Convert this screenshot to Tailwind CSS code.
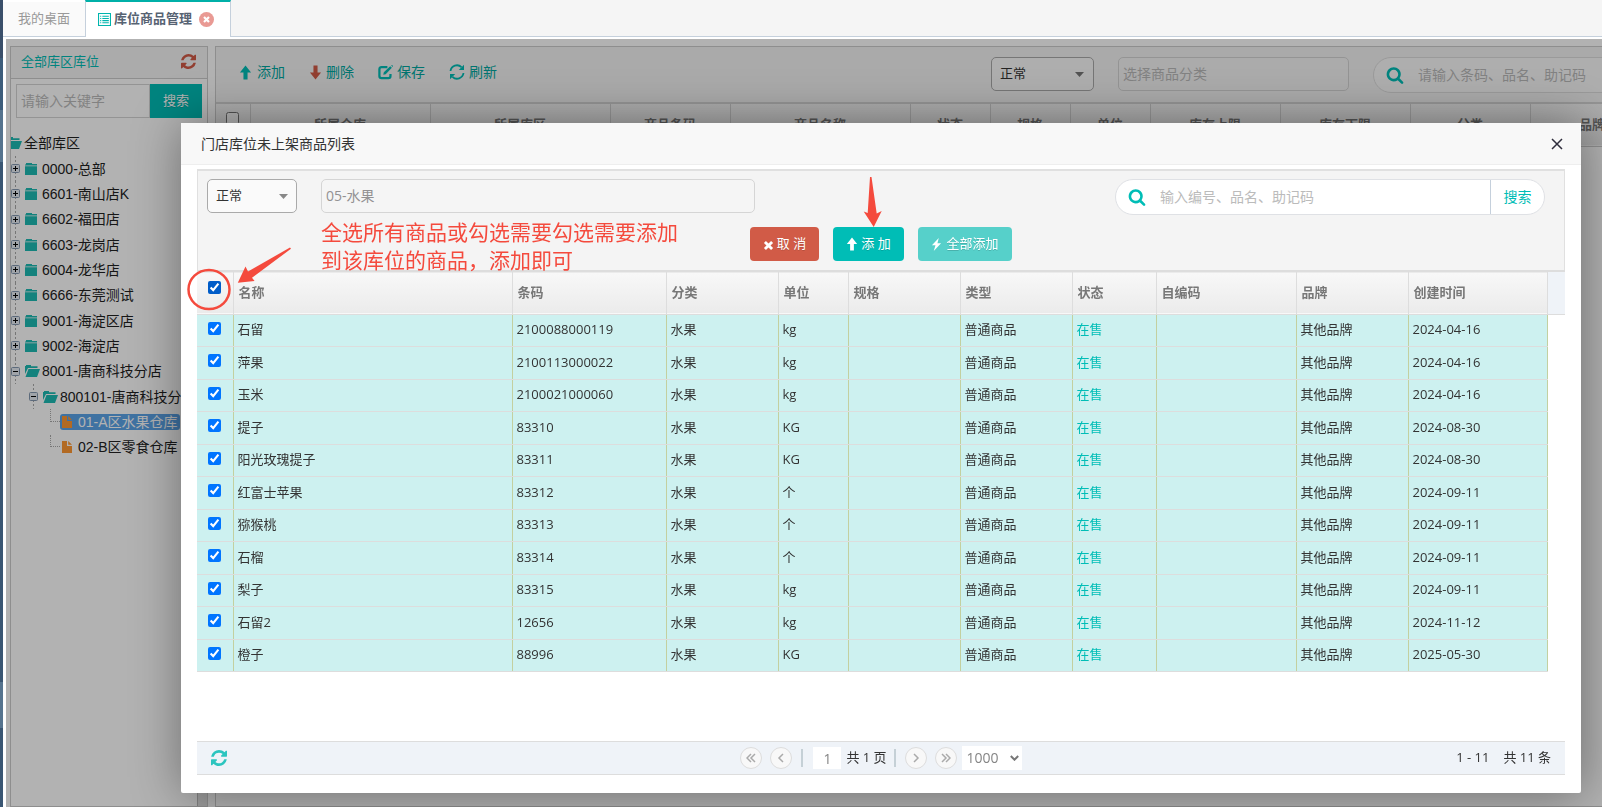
<!DOCTYPE html>
<html lang="zh-CN">
<head>
<meta charset="utf-8">
<title>库位商品管理</title>
<script src="https://cdn.jsdelivr.net/npm/@tailwindcss/browser@4"></script>
</head>
<body class="relative flex h-screen overflow-hidden bg-white font-['Open_Sans','Noto_Sans_CJK_SC',sans-serif] text-[13px] text-[#333]">

<svg class="hidden">
  <symbol id="i-search" viewBox="0 0 1792 1792"><path d="M1216 832q0-185-131.5-316.5t-316.5-131.5-316.5 131.5-131.5 316.5 131.5 316.5 316.5 131.5 316.5-131.5 131.5-316.5zm512 832q0 52-38 90t-90 38q-54 0-90-38l-343-342q-179 124-399 124-143 0-273.5-55.5t-225-150-150-225-55.5-273.5 55.5-273.5 150-225 225-150 273.5-55.5 273.5 55.5 225 150 150 225 55.5 273.5q0 220-124 399l343 343q37 37 37 90z"/></symbol>
  <symbol id="i-refresh" viewBox="128 128 1536 1536"><path d="M1639 1056q0 5-1 7-64 268-268 434.500t-478 166.500q-146 0-282.500-55t-243.500-157l-129 129q-19 19-45 19t-45-19-19-45v-448q0-26 19-45t45-19h448q26 0 45 19t19 45-19 45l-137 137q71 66 161 102t187 36q134 0 250-65t186-179q11-17 53-117 8-23 30-23h192q13 0 22.500 9.500t9.500 22.500zm25-800v448q0 26-19 45t-45 19h-448q-26 0-45-19t-19-45 19-45l138-138q-148-137-349-137-134 0-250 65t-186 179q-11 17-53 117-8 23-30 23h-199q-13 0-22.500-9.500t-9.500-22.500v-7q65-268 270-434.500t480-166.500q146 0 284 55.500t245 156.500l130-129q19-19 45-19t45 19 19 45z"/></symbol>
  <symbol id="i-cycle" viewBox="0 0 16 16"><path d="M1.500 7A6.500 6.500 0 0 1 12.500 3.200M14.500 9A6.500 6.500 0 0 1 3.500 12.800" fill="none" stroke="currentColor" stroke-width="1.800"/><path d="M15 .8v5.200H9.800zM1 15.200V10h5.200z"/></symbol>
  <symbol id="i-up" viewBox="0 0 14 16"><path d="M7 .5 13 8H9.200v7.500H4.800V8H1z"/></symbol>
  <symbol id="i-down" viewBox="0 0 14 16"><path d="M7 15.500 1 8h3.800V.5h4.400V8H13z"/></symbol>
  <symbol id="i-edit" viewBox="0 0 16 16"><path d="M10 2.200H3.700A2.200 2.200 0 0 0 1.500 4.400v7.400A2.200 2.200 0 0 0 3.700 14h7.400a2.200 2.200 0 0 0 2.200-2.200V9.500" fill="none" stroke="currentColor" stroke-width="2.400"/><path d="M13 1.200 14.800 3 8.200 9.800 5.600 10.400 6.200 7.800zM14 .4l1-.4 1 1-.5 1z"/></symbol>
  <symbol id="i-times" viewBox="0 0 12 12"><path d="M3.200 1 6 3.800 8.800 1 11 3.200 8.200 6 11 8.800 8.800 11 6 8.200 3.200 11 1 8.800 3.800 6 1 3.200z"/></symbol>
  <symbol id="i-flash" viewBox="0 0 12 14"><path d="M8.500 0 1 7.800h3.900L3 14l8-8.300H7z"/></symbol>
  <symbol id="i-folder" viewBox="0 0 12 12"><path d="M0 1.500h1V0h6v1h5v1.500H0zM0 3.200h12V12H0z"/></symbol>
  <symbol id="i-open" viewBox="0 0 15 12"><path d="M0 9V1h1V0h5v1.200h6.500V3H3zM3.500 4H15l-3 8H.5z"/></symbol>
  <symbol id="i-file" viewBox="0 0 10 12"><path d="M0 0h5v5h5v7H0zM6.200 0v3.800H10z"/></symbol>
  <symbol id="i-plus" viewBox="0 0 9 9"><rect x=".5" y=".5" width="8" height="8" rx="1" fill="#e6ebf2" stroke="#8598b0"/><path d="M2 4.500h5M4.500 2v5" stroke="#000" fill="none"/></symbol>
  <symbol id="i-minus" viewBox="0 0 9 9"><rect x=".5" y=".5" width="8" height="8" rx="1" fill="#e6ebf2" stroke="#8598b0"/><path d="M2 4.500h5" stroke="#000" fill="none"/></symbol>
</svg>

<div class="flex w-[3px] shrink-0 flex-col">
  <div class="h-[58px] bg-[#3a4f6a]"></div>
  <div class="h-[52px] bg-[#3d5d7b]"></div>
  <div class="h-[52px] bg-[#56748f]"></div>
  <div class="h-[520px] bg-[#3a5673]"></div>
  <div class="h-[46px] bg-[#56748f]"></div>
  <div class="flex-1 bg-[#3a5673]"></div>
</div>

<div class="flex min-w-0 flex-1 flex-col">
  <!-- page tabs -->
  <nav class="flex h-[37px] shrink-0 items-stretch border-b border-[#c5d0dc] bg-[#f5f5f5]">
    <a href="#" class="flex w-[82px] items-center justify-center border-t-2 border-white bg-[#fafafa] pb-px text-[#999]">我的桌面</a>
    <a href="#" class="-mb-px flex w-[146px] items-center justify-center gap-[3px] border-x border-t-2 border-x-[#c5d0dc] border-t-[#00b0a8] bg-white pr-1 pb-px font-bold text-[#576373]">
      <svg class="size-[13px]" viewBox="0 0 12 12" fill="none" stroke="#00b5ad"><path d="M.5.500h11v11H.5zM2 3h1m1 0h6M2 5h1m1 0h6M2 7h1m1 0h6M2 9h1m1 0h6"/></svg>
      库位商品管理
      <svg class="ml-1 size-[15px]" viewBox="0 0 15 15"><circle cx="7.500" cy="7.500" r="7.500" fill="#e99a94"/><path d="m5 5 5 5m0-5-5 5" stroke="#fff" stroke-width="2.200"/></svg>
    </a>
  </nav>

  <main class="relative mt-0.5 ml-[3px] flex min-h-0 flex-1 gap-[7px] overflow-hidden pt-[7px] pl-1">
    <!-- location tree -->
    <aside class="flex w-[198px] shrink-0 flex-col border border-[#ccc]">
      <header class="flex h-8 items-center justify-between border-b border-[#ccc] bg-[#f5f5f5] pr-[11px] pb-0.5 pl-[10px] text-[#00bdb6]">
        <span>全部库区库位</span>
        <button aria-label="刷新" class="text-[#d15b47]"><svg class="size-[15px] fill-current"><use href="#i-refresh"/></svg></button>
      </header>
      <form class="flex h-[44px] items-start px-[5px] pt-[5px]">
        <input aria-label="关键字" placeholder="请输入关键字" class="h-[34px] min-w-0 flex-1 border border-[#d5d5d5] bg-white px-1 pb-0.5 text-sm placeholder:text-[#bbb]">
        <button type="button" class="h-[34px] w-[52px] bg-[#00bdb6] text-white text-shadow-2xs">搜索</button>
      </form>
      <div class="flex min-h-0 flex-1">
        <div class="min-w-0 flex-1 overflow-hidden pt-[7px] font-['Liberation_Sans','Noto_Sans_CJK_SC',sans-serif] text-sm text-[#222]">
          <div class="flex h-[26px] items-center gap-[2px]"><svg class="h-3 w-[11px] text-[#1ebab3] fill-current" viewBox="4 0 11 12"><use href="#i-open" width="15" height="12"/></svg>全部库区</div>
          <ul id="tree" class="grid h-[304px] auto-rows-fr"></ul>
        </div>
        <div class="mt-3 w-[10px] border-l border-[#bbb] bg-[#e2e2e2]"></div>
      </div>
    </aside>

    <!-- goods grid behind the dialog -->
    <section class="min-w-0 flex-1 overflow-hidden border border-r-0 border-[#ccc]">
      <div class="relative flex h-[57px] justify-between border-b-2 border-[#d5d5d5] bg-[#f4f4f4]">
        <div class="flex h-[50px] items-center gap-6 pl-[23px] text-sm text-[#00a8a1]">
          <button class="flex items-center gap-[5px]"><svg class="h-[15px] w-[13px] fill-[#00bdb6]"><use href="#i-up"/></svg>添加</button>
          <button class="flex items-center gap-1"><svg class="h-[15px] w-[13px] fill-[#d15b47]"><use href="#i-down"/></svg>删除</button>
          <button class="flex items-center gap-1"><svg class="size-[15px] fill-current text-[#00bdb6]"><use href="#i-edit"/></svg>保存</button>
          <button class="flex items-center gap-1"><svg class="size-4 fill-current text-[#00bdb6]"><use href="#i-cycle"/></svg>刷新</button>
        </div>
        <div class="flex shrink-0 gap-6 pt-[10px]">
          <div class="relative h-[34px] w-[103px]">
            <select aria-label="状态" class="size-full appearance-none rounded-[5px] border border-[#aaa] bg-[#fafafa] px-2 text-[#333]"><option>正常</option></select>
            <svg class="pointer-events-none absolute top-[15px] right-[10px] h-[5px] w-[9px] fill-[#777]" viewBox="0 0 9 5"><path d="M0 0h9L4.500 5z"/></svg>
          </div>
          <input aria-label="商品分类" placeholder="选择商品分类" class="h-[34px] w-[231px] rounded-[5px] border border-[#d5d5d5] bg-[#f5f5f5] px-1 pb-0.5 text-sm placeholder:text-[#bbb]">
          <div class="-mr-[41px] flex h-9 w-[270px] items-center rounded-full border border-[#ddd] bg-[#fafafa] pl-3">
            <svg class="size-[18px] fill-[#00bdb6]"><use href="#i-search"/></svg>
            <input aria-label="搜索商品" placeholder="请输入条码、品名、助记码" class="ml-[14px] min-w-0 flex-1 bg-transparent text-sm placeholder:text-[#bbb]">
          </div>
        </div>
      </div>
      <table class="w-[1438px] table-fixed text-[#777]">
        <colgroup><col class="w-[34px]"><col class="w-[180px]"><col class="w-[180px]"><col class="w-[120px]"><col class="w-[180px]"><col class="w-[80px]"><col class="w-[80px]"><col class="w-[80px]"><col class="w-[130px]"><col class="w-[130px]"><col class="w-[120px]"><col class="w-[124px]"></colgroup>
        <thead><tr class="h-[42px] border-b border-[#ccc] bg-linear-to-b from-[#f8f8f8] to-[#ebebeb] *:border-r *:border-[#d5d5d5] *:font-bold">
          <th class="align-top"><input type="checkbox" aria-label="全选" class="mt-2 size-[13px]"></th><th>所属仓库</th><th>所属库区</th><th>商品条码</th><th>商品名称</th><th>状态</th><th>规格</th><th>单位</th><th>库存上限</th><th>库存下限</th><th>分类</th><th>品牌</th>
        </tr></thead>
      </table>
    </section>
    <div class="absolute inset-0 bg-black/30"></div>
  </main>
</div>

<!-- dialog -->
<div role="dialog" aria-labelledby="dlg" class="fixed top-[123px] right-[21px] bottom-[14px] left-[181px] flex flex-col rounded-[2px] bg-white shadow-[1px_1px_50px_rgba(0,0,0,0.4)]">
  <header class="flex h-[42px] shrink-0 items-center justify-between border-b border-[#eee] bg-[#f8f8f8] pr-[18px] pl-5">
    <h1 id="dlg" class="text-sm">门店库位未上架商品列表</h1>
    <button aria-label="关闭"><svg class="size-3" viewBox="0 0 12 12" fill="none" stroke="#2e2d3c" stroke-width="1.500"><path d="m1 1 10 10m0-10L1 11"/></svg></button>
  </header>
  <div class="mx-4 mt-1 flex min-h-0 flex-1 flex-col">
    <div class="flex h-[101px] shrink-0 flex-col gap-3 border border-t-2 border-b-0 border-[#e0e0e0] bg-[#f4f4f4] px-[9px] pt-2">
      <div class="flex">
        <div class="relative h-[34px] w-[90px]">
          <select aria-label="商品状态" class="size-full appearance-none rounded-[5px] border border-[#aaa] bg-[#fafafa] px-2 text-[#333]"><option>正常</option></select>
          <svg class="pointer-events-none absolute top-[15px] right-[9px] h-[5px] w-[9px] fill-[#888]" viewBox="0 0 9 5"><path d="M0 0h9L4.500 5z"/></svg>
        </div>
        <input aria-label="分类" value="05-水果" class="ml-6 h-[34px] w-[434px] rounded-[5px] border border-[#d5d5d5] bg-[#f5f5f5] px-1 pb-0.5 text-sm text-[#939192]">
        <form class="mr-[10px] ml-auto flex h-9 w-[430px] items-stretch overflow-hidden rounded-full border border-[#dfe1e5] bg-white">
          <svg class="ml-3 size-[18px] self-center fill-[#00bdb6]"><use href="#i-search"/></svg>
          <input aria-label="搜索" placeholder="输入编号、品名、助记码" class="ml-[14px] min-w-0 flex-1 text-sm placeholder:text-[#bbb]">
          <button type="button" class="w-[54px] border-l border-[#c5d0dc] text-sm text-[#00bdb6]">搜索</button>
        </form>
      </div>
      <div class="flex justify-center gap-[14px] text-white">
        <button class="flex h-[34px] w-[69px] items-center justify-center gap-[3px] rounded-[4px] bg-[#d15b47] text-shadow-2xs"><svg class="mt-0.5 size-[11px] fill-white"><use href="#i-times"/></svg>取 消</button>
        <button class="flex h-[34px] w-[71px] items-center justify-center gap-[3px] rounded-[4px] bg-[#00bdb6] text-shadow-2xs"><svg class="h-[14px] w-[12px] fill-white"><use href="#i-up"/></svg>添 加</button>
        <button class="flex h-[34px] w-[94px] items-center justify-center gap-1 rounded-[4px] bg-[#56d0ca] text-shadow-2xs"><svg class="h-[13px] w-[11px] fill-white"><use href="#i-flash"/></svg>全部添加</button>
      </div>
    </div>

    <table class="w-full table-fixed border-collapse">
      <colgroup><col class="w-9"><col class="w-[279px]"><col class="w-[154px]"><col class="w-[112px]"><col class="w-[70px]"><col class="w-[112px]"><col class="w-[112px]"><col class="w-[84px]"><col class="w-[140px]"><col class="w-[112px]"><col class="w-[139px]"><col></colgroup>
      <thead>
        <tr class="h-[43px] border-t-2 border-b border-[#ddd] bg-linear-to-b from-[#f8f8f8] to-[#ebebeb] text-left text-[#777] *:border-r *:border-[#ddd] *:px-[5px] *:font-bold *:last:border-r-0">
          <th class="text-center align-top"><input type="checkbox" checked aria-label="全选" class="mt-[9px] size-[13px] accent-[#005cc8]"></th>
          <th>名称</th><th>条码</th><th>分类</th><th>单位</th><th>规格</th><th>类型</th><th>状态</th><th>自编码</th><th>品牌</th><th>创建时间</th><th class="bg-[#eff3f8]"></th>
        </tr>
      </thead>
      <tbody id="rows"></tbody>
    </table>

    <footer class="mt-auto mb-[18px] grid h-[34px] shrink-0 grid-cols-[1fr_auto_1fr] items-center border-y border-[#ddd] bg-[#eff3f8] px-[14px]">
      <button aria-label="刷新" class="justify-self-start"><svg class="size-4 fill-[#2cc5bf]"><use href="#i-refresh"/></svg></button>
      <div class="flex items-center">
        <button aria-label="首页" class="grid size-[22px] place-items-center rounded-full border border-[#ddd] bg-[#f8f8f8]"><svg class="size-[10px]" viewBox="0 0 10 10" fill="none" stroke="#aaa" stroke-width="1.500"><path d="M5 1 1 5l4 4M9 1 5 5l4 4"/></svg></button>
        <button aria-label="上一页" class="ml-2 grid size-[22px] place-items-center rounded-full border border-[#ddd] bg-[#f8f8f8]"><svg class="size-[10px]" viewBox="0 0 10 10" fill="none" stroke="#aaa" stroke-width="1.500"><path d="M7 1 3 5l4 4"/></svg></button>
        <span class="ml-[9px] h-[18px] w-0.5 bg-[#c5d0d6]"></span>
        <input aria-label="页码" value="1" class="ml-[10px] h-[22px] w-7 bg-white text-center text-sm text-[#858585]">
        <span class="ml-[5px]">共 1 页</span>
        <span class="ml-[7px] h-[18px] w-0.5 bg-[#c5d0d6]"></span>
        <button aria-label="下一页" class="ml-[9px] grid size-[22px] place-items-center rounded-full border border-[#ddd] bg-[#f8f8f8]"><svg class="size-[10px]" viewBox="0 0 10 10" fill="none" stroke="#aaa" stroke-width="1.500"><path d="m3 1 4 4-4 4"/></svg></button>
        <button aria-label="末页" class="ml-2 grid size-[22px] place-items-center rounded-full border border-[#ddd] bg-[#f8f8f8]"><svg class="size-[10px]" viewBox="0 0 10 10" fill="none" stroke="#aaa" stroke-width="1.500"><path d="m1 1 4 4-4 4M5 1l4 4-4 4"/></svg></button>
        <div class="relative ml-[5px] h-6 w-[60px]">
          <select aria-label="每页条数" class="size-full appearance-none bg-white pl-[5px] text-sm text-[#858585]"><option>1000</option></select>
          <svg class="pointer-events-none absolute top-[9px] right-[3px] h-[6px] w-[9px]" viewBox="0 0 9 6" fill="none" stroke="#777" stroke-width="2"><path d="m.8 1 3.700 3.700L8.200 1"/></svg>
        </div>
      </div>
      <div class="flex gap-[14px] justify-self-end"><span>1 - 11</span><span>共 11 条</span></div>
    </footer>
  </div>

  <!-- red guidance marks over the dialog -->
  <p class="pointer-events-none absolute top-[95px] left-[140px] text-[21px] leading-7 text-[#f44a3d]">全选所有商品或勾选需要勾选需要添加<br>到该库位的商品，添加即可</p>
  <svg class="pointer-events-none absolute top-0 left-0 h-[200px] w-[720px] overflow-visible" viewBox="181 123 720 200" fill="#f44a3d">
    <ellipse cx="209" cy="289.500" rx="20.500" ry="19.500" fill="none" stroke="#f44a3d" stroke-width="2.500"/>
    <path d="M290 247.500 291 248.700 252 277.700 254.600 281 237.800 282.700 245.500 266.500 248 271.500z"/>
    <path d="M870 177h1.500l5.200 36.500 5-2.500-8 16-10-15.500 4 1.500z"/>
  </svg>
</div>

<script>
const shops = [
  [0, 'plus', 'folder', '0000-总部'], [0, 'plus', 'folder', '6601-南山店K'], [0, 'plus', 'folder', '6602-福田店'],
  [0, 'plus', 'folder', '6603-龙岗店'], [0, 'plus', 'folder', '6004-龙华店'], [0, 'plus', 'folder', '6666-东莞测试'],
  [0, 'plus', 'folder', '9001-海淀区店'], [0, 'plus', 'folder', '9002-海淀店'], [0, 'minus', 'open', '8001-唐商科技分店'],
  [1, 'minus', 'open', '800101-唐商科技分店'], [2, '', 'file', '01-A区水果仓库'], [2, '', 'file', '02-B区零食仓库']];
const indent = ['', 'pl-[18px]', 'pl-[39px]'];
const icons = {
  folder: '<svg class="mr-[5px] ml-[5px] h-3 w-3 shrink-0 fill-[#1ebab3]"><use href="#i-folder"/></svg>',
  open: '<svg class="mr-[2px] ml-[5px] h-3 w-[15px] shrink-0 fill-[#1ebab3]"><use href="#i-open"/></svg>',
  file: '<svg class="mr-[6px] h-3 w-[10px] shrink-0 fill-[#ff9833]"><use href="#i-file"/></svg>'
};
document.getElementById('tree').innerHTML = shops.map(([lv, box, icon, name], i) => {
  const lead = box
    ? `<span class="relative grid h-full w-[9px] shrink-0 place-items-center bg-[linear-gradient(#aaa_50%,transparent_50%)] bg-[length:1px_4px] bg-[position:center_top] bg-repeat-y"><svg class="size-[9px]"><use href="#i-${box}"/></svg></span>`
    : `<span class="h-full w-[10px] shrink-0"><span class="block h-1/2 w-full border-b border-l border-dotted border-[#aaa]"></span></span>`;
  const label = box
    ? `${icons[icon]}${name}`
    : `<span class="flex h-4 items-center rounded-[3px] pl-[2px] pr-[2px] ${i === 10 ? 'bg-[#5ba4e9] text-white' : ''}">${icons[icon]}${name}</span>`;
  return `<li class="flex items-center whitespace-nowrap ${indent[lv]}">${lead}${label}</li>`;
}).join('');

const goods = [
  ['石留', '2100088000119', 'kg', '2024-04-16'], ['萍果', '2100113000022', 'kg', '2024-04-16'],
  ['玉米', '2100021000060', 'kg', '2024-04-16'], ['提子', '83310', 'KG', '2024-08-30'],
  ['阳光玫瑰提子', '83311', 'KG', '2024-08-30'], ['红富士苹果', '83312', '个', '2024-09-11'],
  ['猕猴桃', '83313', '个', '2024-09-11'], ['石榴', '83314', '个', '2024-09-11'],
  ['梨子', '83315', 'kg', '2024-09-11'], ['石留2', '12656', 'kg', '2024-11-12'], ['橙子', '88996', 'KG', '2025-05-30']];
document.getElementById('rows').innerHTML = goods.map(([name, code, unit, date], i) =>
  `<tr class="${i % 2 ? 'h-[33px]' : 'h-8'} *:border-r *:border-r-[#c3d0a0] *:border-b *:border-b-[#ddd] *:bg-[#cdf1f0] *:px-1">
    <td class="text-center"><input type="checkbox" checked aria-label="选择${name}" class="block mx-auto mb-1 size-[13px] accent-[#0075ff]"></td>
    <td>${name}</td><td>${code}</td><td>水果</td><td>${unit}</td><td></td><td>普通商品</td>
    <td class="text-[#00bdb6]">在售</td><td></td><td>其他品牌</td><td>${date}</td></tr>`).join('');
</script>
</body>
</html>
